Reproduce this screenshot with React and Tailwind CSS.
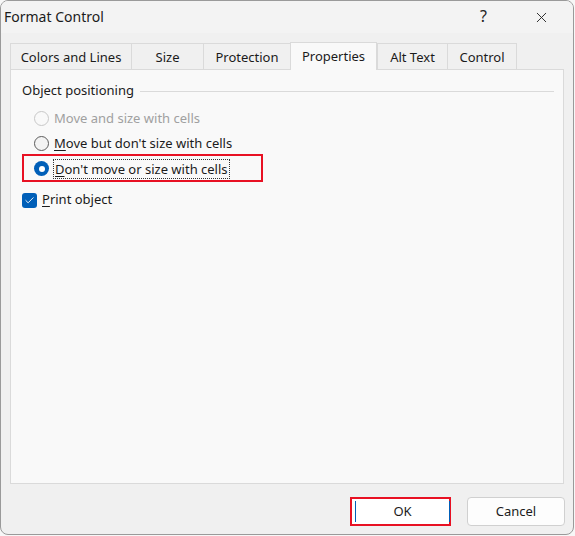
import { useState } from "react";
import { Check, X } from "lucide-react";

const tabs = [
  { label: "Colors and Lines", w: "w-[121px]" },
  { label: "Size", w: "w-[72px]" },
  { label: "Protection", w: "w-[87px]" },
  { label: "Properties", w: "w-[87px]" },
  { label: "Alt Text", w: "w-[70px]" },
  { label: "Control", w: "w-[70px]" },
];

function Radio({ checked, disabled }) {
  if (checked) {
    return (
      <span className="w-[15px] h-[15px] rounded-full bg-[#005fb8] flex items-center justify-center shrink-0">
        <span className="w-[6px] h-[6px] rounded-full bg-white" />
      </span>
    );
  }
  return (
    <span
      className={`w-[15px] h-[15px] rounded-full border shrink-0 ${
        disabled ? "border-[#c8c8c8] bg-[#f9f9f9]" : "border-[#5c5c5c] bg-[#f3f3f3]"
      }`}
    />
  );
}

export default function App() {
  const [active] = useState("Properties");

  return (
    <div
      className="w-[575px] h-[536px] bg-[#f7f7f7] text-[13px] text-[#1b1b1b]"
      style={{ fontFamily: '"Noto Sans", "Open Sans", sans-serif' }}
    >
      <div className="w-[574px] h-[535px] border border-[#9a9a9a] rounded-[8px] bg-[#f0f0f0] flex flex-col overflow-hidden">
        {/* title bar */}
        <div className="h-[32px] flex items-center bg-[#f3f3f3]">
          <span className="pl-[3px] pb-[2px] text-[14px] text-[#1b1b1b]">Format Control</span>
          <span className="ml-auto mr-[46px] pb-[2px] text-[16px] text-[#222]">?</span>
          <X size={17} strokeWidth={1.3} className="mr-[23px] text-[#222]" />
        </div>

        {/* tabs */}
        <div className="flex pl-[9px] pt-[10px] h-[36px] items-end">
          {tabs.map((t) =>
            t.label === active ? (
              <div
                key={t.label}
                className={`${t.w} h-[28px] -mb-px z-10 bg-[#f9f9f9] border border-b-0 border-[#dadada] flex items-center justify-center`}
              >
                {t.label}
              </div>
            ) : (
              <div
                key={t.label}
                className={`${t.w} h-[26px] bg-[#f0f0f0] border border-r-0 border-b-0 border-[#dadada] last:border-r flex items-center justify-center pt-[2px]`}
              >
                {t.label}
              </div>
            )
          )}
        </div>

        {/* panel */}
        <div className="mx-[9px] h-[415px] bg-[#f9f9f9] border border-[#dadada] pt-[11px] pl-[11px] pr-[9px]">
          <div className="flex items-center gap-[6px] h-[20px]">
            <span>Object positioning</span>
            <div className="flex-1 h-px bg-[#dadada] mt-[1px]" />
          </div>

          <div className="mt-[5px] pl-[12px] flex flex-col">
            <div className="flex items-center gap-[5px] h-[25px] text-[#a0a0a0]">
              <Radio disabled />
              <span>Move and size with cells</span>
            </div>
            <div className="flex items-center gap-[5px] h-[25px]">
              <Radio />
              <span>
                <span className="underline underline-offset-2">M</span>ove but don't size with cells
              </span>
            </div>
            <div className="relative flex items-center gap-[4px] h-[25px]">
              <Radio checked />
              <span className="border border-dotted border-[#333] px-px leading-[18px]">
                <span className="underline underline-offset-2">D</span>on't move or size with cells
              </span>
              <div className="absolute left-[-12px] top-[-2px] w-[241px] h-[28px] border-2 border-[#e81123]" />
            </div>
          </div>

          <div className="mt-[8px] flex items-center gap-[5px] h-[22px]">
            <span className="w-[15px] h-[15px] rounded-[3px] bg-[#005fb8] flex items-center justify-center">
              <Check size={11} strokeWidth={2} className="text-white" />
            </span>
            <span>
              <span className="underline underline-offset-2">P</span>rint object
            </span>
          </div>
        </div>

        {/* buttons */}
        <div className="flex justify-end gap-[16px] pr-[8px] pt-[13px]">
          <button className="relative w-[101px] h-[29px] bg-white border-2 border-[#e81123] flex items-center justify-center pl-[4px]">
            <span className="absolute left-[3px] top-[2px] bottom-[2px] w-px bg-[#005fb8]" />
            <span className="absolute right-[-1px] top-[2px] bottom-[2px] w-px bg-[#005fb8]" />
            OK
          </button>
          <button className="w-[98px] h-[29px] bg-[#fdfdfd] border border-[#d0d0d0] rounded-[4px]">
            Cancel
          </button>
        </div>
      </div>
    </div>
  );
}
